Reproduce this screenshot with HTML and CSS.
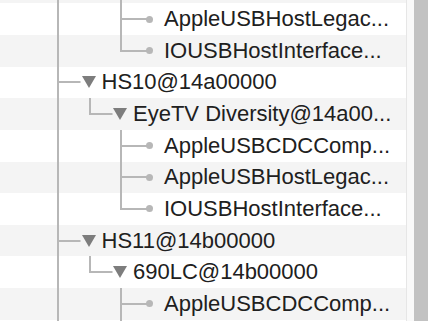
FILE: index.html
```html
<!DOCTYPE html>
<html>
	<head>
		<meta charset="UTF-8">
		<title>IORegistry</title>
		<link rel="stylesheet" href="styles.css">
	</head>
	<body>
		<div class="outline">
			<div class="tree">
				<div class="row">
					<div class="cell pipe"></div><div class="cell"></div><div class="cell tee leaf"></div>
					<span class="dot"></span><span class="label">AppleUSBCDCComp...</span>
				</div>
				<div class="row">
					<div class="cell pipe"></div><div class="cell"></div><div class="cell tee leaf"></div>
					<span class="dot"></span><span class="label">AppleUSBHostLegac...</span>
				</div>
				<div class="row">
					<div class="cell pipe"></div><div class="cell"></div><div class="cell ell leaf"></div>
					<span class="dot"></span><span class="label">IOUSBHostInterface...</span>
				</div>
				<div class="row">
					<div class="cell tee open"></div>
					<span class="arrow"></span><span class="label">HS10@14a00000</span>
				</div>
				<div class="row">
					<div class="cell pipe"></div><div class="cell ell open"></div>
					<span class="arrow"></span><span class="label">EyeTV Diversity@14a00...</span>
				</div>
				<div class="row">
					<div class="cell pipe"></div><div class="cell"></div><div class="cell tee leaf"></div>
					<span class="dot"></span><span class="label">AppleUSBCDCComp...</span>
				</div>
				<div class="row">
					<div class="cell pipe"></div><div class="cell"></div><div class="cell tee leaf"></div>
					<span class="dot"></span><span class="label">AppleUSBHostLegac...</span>
				</div>
				<div class="row">
					<div class="cell pipe"></div><div class="cell"></div><div class="cell ell leaf"></div>
					<span class="dot"></span><span class="label">IOUSBHostInterface...</span>
				</div>
				<div class="row">
					<div class="cell tee open"></div>
					<span class="arrow"></span><span class="label">HS11@14b00000</span>
				</div>
				<div class="row">
					<div class="cell pipe"></div><div class="cell ell open"></div>
					<span class="arrow"></span><span class="label">690LC@14b00000</span>
				</div>
				<div class="row">
					<div class="cell pipe"></div><div class="cell"></div><div class="cell tee leaf"></div>
					<span class="dot"></span><span class="label">AppleUSBCDCComp...</span>
				</div>
				<div class="row">
					<div class="cell pipe"></div><div class="cell"></div><div class="cell tee leaf"></div>
					<span class="dot"></span><span class="label">AppleUSBHostLegac...</span>
				</div>
			</div>
		</div>
		<div class="scroller"><div class="thumb"></div></div>
	</body>
</html>
```

FILE: styles.css
```css
*{margin: 0;padding: 0;box-sizing: border-box;}
html,body{height: 100%;}
body{display: flex;overflow: hidden;background: #fff;font-family: "Liberation Sans", Arial, sans-serif;font-size: 22px;color: #202020;}

.outline{flex: 1;overflow: hidden;}
.tree{margin-top: -28.35px;}
.row{display: flex;align-items: center;height: 31.65px;padding-left: 57px;white-space: nowrap;}
.row:nth-child(odd){background: #f4f4f4;}

/* connector cells */
.cell{align-self: stretch;width: 31.5px;flex: none;}
.pipe{background: linear-gradient(#b7b7b7,#b7b7b7) 0 0/2px 100% no-repeat;}
.tee{background:
	linear-gradient(#b7b7b7,#b7b7b7) 0 0/2px 100% no-repeat,
	linear-gradient(#b7b7b7,#b7b7b7) 0 50%/100% 2px no-repeat;}
.ell{background:
	linear-gradient(#b7b7b7,#b7b7b7) 0 0/2px calc(50% + 1px) no-repeat,
	linear-gradient(#b7b7b7,#b7b7b7) 0 50%/100% 2px no-repeat;}
.cell.open{width: 24.5px;background-size: 2px 100%, 23.5px 2px;}
.cell.ell.open{background-size: 2px calc(50% + 1px), 23.5px 2px;}
.cell.leaf{width: 27px;}

/* markers */
.arrow{flex: none;width: 0;height: 0;border-left: 7px solid transparent;border-right: 7px solid transparent;border-top: 12px solid #7d7d7d;margin-right: 6px;}
.dot{flex: none;width: 7px;height: 7px;border-radius: 50%;background: #b7b7b7;margin-left: -1px;margin-right: 11px;}
.label{line-height: 1;}

.scroller{width: 22px;flex: none;border-left: 1px solid #e6e6e6;background: #f9f9f9;display: flex;justify-content: flex-end;}
.thumb{width: 14px;background: #c2c2c2;}
```
